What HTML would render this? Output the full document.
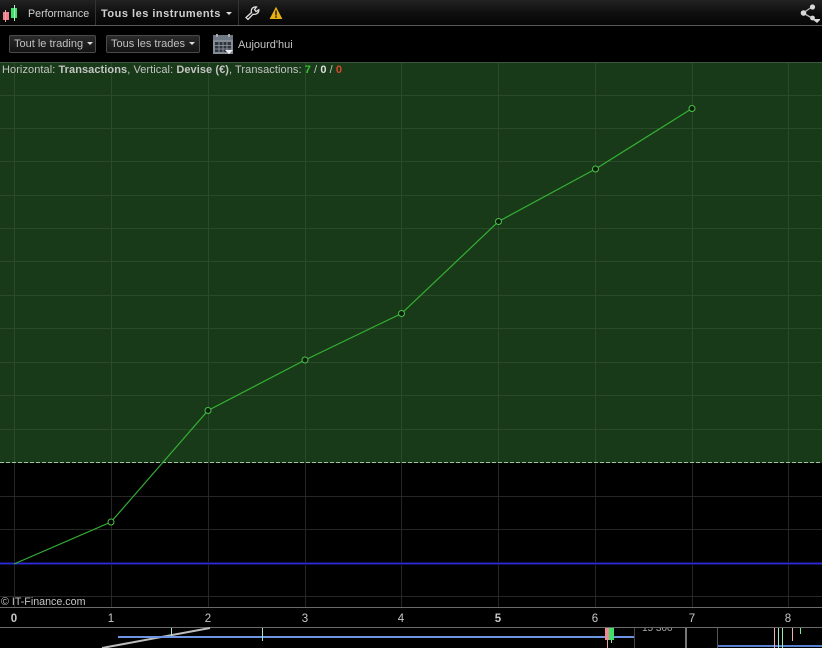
<!DOCTYPE html>
<html lang="fr"><head><meta charset="utf-8"><title>Performance</title>
<style>
html,body{margin:0;padding:0;background:#000}
#p{position:relative;width:822px;height:648px;overflow:hidden;background:#000;font-family:"Liberation Sans",sans-serif;font-size:11px;color:#ccc}
.a{position:absolute;white-space:nowrap}
#top{left:0;top:0;width:822px;height:25px;background:linear-gradient(#222,#0e0e0e 55%,#060606);border-bottom:1px solid #5a5a5a}
.sep{position:absolute;top:0;width:1px;height:25px;background:#333}
.btn{position:absolute;top:35px;height:16px;border:1px solid #4a4a4a;border-radius:2px;background:linear-gradient(#2a2a2a,#141414);line-height:17px;color:#c0c0c0;font-size:11px;text-indent:4px}
.car{display:inline-block;width:0;height:0;border-left:3px solid transparent;border-right:3px solid transparent;border-top:3px solid #ddd;vertical-align:2px;margin-left:4px;text-indent:0}
.x{position:absolute;top:612px;width:30px;text-align:center;color:#c8c8c8;font-size:11.500px;line-height:14px}
</style></head><body><div id="p">
<div class="a" id="top"></div>
<div class="sep" style="left:95px"></div><div class="sep" style="left:238px"></div>
<svg class="a" style="left:0;top:0" width="24" height="24" viewBox="0 0 24 24" shape-rendering="crispEdges">
<rect x="3" y="12" width="6" height="8" fill="#f0808c"/><rect x="5" y="10" width="1" height="12" fill="#f0a0a8"/>
<rect x="11" y="8" width="6" height="10" fill="#3ee06a"/><rect x="14" y="5" width="1" height="16" fill="#b0f0c0"/></svg>
<div class="a" style="left:28px;top:7px;line-height:14px;color:#cfcfcf;font-size:10.700px">Performance</div>
<div class="a" style="left:101px;top:7px;line-height:14px;color:#d0d0d0;font-weight:bold;font-size:11px;letter-spacing:.5px">Tous les instruments<span class="car" style="margin-left:5px"></span></div>
<svg class="a" style="left:244px;top:5px" width="16" height="16" viewBox="0 0 16 16"><path d="M2 12.500 L7.500 7.500 C6.500 4 9 1.500 12.500 2 L10.500 4.500 L12 6.500 L14.800 4.800 C15 8 12 10 9 9.200 L4 14.500 Z" fill="none" stroke="#e0e0e0" stroke-width="1.300"/></svg>
<svg class="a" style="left:269px;top:6px" width="14" height="14" viewBox="0 0 14 14"><path d="M7 .8 L13.400 13 H.6 Z" fill="#e8b010"/><rect x="6.200" y="4.500" width="1.600" height="5" fill="#322"/><rect x="6.200" y="10.200" width="1.600" height="1.600" fill="#322"/></svg>
<svg class="a" style="left:800px;top:3px" width="20" height="20" viewBox="0 0 20 20"><path d="M3 10 L12 4 M3 10 L12 15" stroke="#bbb" stroke-width="1.300"/><circle cx="3.500" cy="10" r="2.800" fill="#d8d8d8"/><circle cx="12.500" cy="4" r="2.600" fill="#d8d8d8"/><circle cx="12.500" cy="15" r="2.400" fill="#d8d8d8"/><path d="M12 16 H21 L17 20 Z" fill="#d8d8d8"/></svg>

<div class="btn" style="left:9px;width:85px">Tout le trading<span class="car"></span></div>
<div class="btn" style="left:106px;width:92px">Tous les trades<span class="car"></span></div>
<svg class="a" style="left:212px;top:33px" width="22" height="22" viewBox="0 0 22 22"><rect x="1" y="2" width="20" height="19" fill="#848c98"/><rect x="1" y="2" width="20" height="5" fill="#6f7885"/><rect x="4" y="1" width="2" height="3" fill="#aaa"/><rect x="16" y="1" width="2" height="3" fill="#aaa"/><rect x="3" y="9" width="16" height="10" fill="#30353c"/><path d="M3 12.500H19M3 16H19M7 9V19M11 9V19M15 9V19" stroke="#98a0ac" stroke-width=".8"/><path d="M13 17H21L17 21Z" fill="#eee"/></svg>
<div class="a" style="left:238px;top:38px;line-height:14px;color:#c4c4c4;font-size:11px">Aujourd'hui</div>

<div class="a" style="left:0;top:62px;width:822px;height:1px;background:#3f5a3f"></div>
<div class="a" style="left:0;top:63px;width:822px;height:400px;background:#193a19"></div>

<svg class="a" style="left:0;top:0" width="822" height="648" viewBox="0 0 822 648">
<g stroke="#2a4a2a" stroke-width="1" shape-rendering="crispEdges">
<path d="M0 95.500H822M0 128.500H822M0 161.500H822M0 195.500H822M0 228.500H822M0 261.500H822M0 295.500H822M0 328.500H822M0 362.500H822M0 395.500H822M0 429.500H822"/>
<path d="M14.500 63V463M111.500 63V463M208.500 63V463M305.500 63V463M401.500 63V463M498.500 63V463M595.500 63V463M692.500 63V463M788.500 63V463"/>
</g>
<g stroke="#262626" stroke-width="1" shape-rendering="crispEdges">
<path d="M0 496.500H822M0 529.500H822M0 596.500H822"/>
<path d="M14.500 463V607M111.500 463V607M208.500 463V607M305.500 463V607M401.500 463V607M498.500 463V607M595.500 463V607M692.500 463V607M788.500 463V607"/>
</g>
<path d="M0 462.500H822" stroke="#9ac89a" stroke-width="1" stroke-dasharray="4 2" shape-rendering="crispEdges"/>
<rect x="0" y="562" width="822" height="3" fill="#12125e"/>
<rect x="0" y="563" width="822" height="1" fill="#2a2ad8"/>
<path d="M0 607.500H822M0 627.500H822" stroke="#6a6a6a" stroke-width="1" shape-rendering="crispEdges"/>
<path d="M14 564L111 522L208 410.500L305 360L401.500 313.500L498.500 221.500L595.500 169L692 108.500" fill="none" stroke="#34b034" stroke-width="1.200"/>
<g fill="#0a200a" stroke="#4cc04c" stroke-width="1">
<circle cx="111" cy="522" r="3" fill="#000"/><circle cx="208" cy="410.500" r="3"/><circle cx="305" cy="360" r="3"/><circle cx="401.500" cy="313.500" r="3"/><circle cx="498.500" cy="221.500" r="3"/><circle cx="595.500" cy="169" r="3"/><circle cx="692" cy="108.500" r="3"/>
</g>
<path d="M102 648L210 628" stroke="#bdbdbd" stroke-width="2"/>
<path d="M118 637H634" stroke="#6d95e0" stroke-width="2" shape-rendering="crispEdges"/>
<path d="M171.500 628V636M262.500 628V641" stroke="#9fe8cc" stroke-width="1" shape-rendering="crispEdges"/>
<g shape-rendering="crispEdges">
<rect x="605" y="628" width="4" height="12" fill="#f08a92"/><rect x="609" y="628" width="5" height="12" fill="#3ee06a"/><rect x="607" y="640" width="1" height="8" fill="#f0a0a0"/><rect x="611" y="640" width="1" height="3" fill="#7fe8a0"/>
<rect x="634" y="628" width="1" height="20" fill="#444"/><rect x="685" y="628" width="2" height="20" fill="#777"/><rect x="717" y="628" width="1" height="20" fill="#555"/>
<rect x="718" y="645" width="104" height="2" fill="#5a80d0"/>
<rect x="774" y="628" width="1" height="20" fill="#f0b0b0"/><rect x="778" y="628" width="1" height="20" fill="#9fe8cc"/><rect x="782" y="628" width="1" height="20" fill="#9fe8b0"/><rect x="792" y="628" width="1" height="13" fill="#f0b0b0"/><rect x="800" y="628" width="1" height="6" fill="#7fe8a0"/>
</g>
</svg>

<div class="a" style="left:2px;top:63px;line-height:14px;font-size:11px;letter-spacing:.07px;color:#c4c4c4">Horizontal: <b>Transactions</b>, Vertical: <b>Devise (€)</b>, Transactions: <b style="color:#36c236">7</b> / <b style="color:#ddd">0</b> / <b style="color:#d8482a">0</b></div>
<div class="a" style="left:1px;top:595px;line-height:14px;font-size:10.700px;color:#c4c4c4">© IT-Finance.com</div>
<div class="x" style="left:-1px;font-weight:bold">0</div><div class="x" style="left:96px">1</div><div class="x" style="left:193px">2</div><div class="x" style="left:290px">3</div><div class="x" style="left:386px">4</div><div class="x" style="left:483px;font-weight:bold">5</div><div class="x" style="left:580px">6</div><div class="x" style="left:677px">7</div><div class="x" style="left:773px">8</div>
<div class="a" style="left:642px;top:628px;width:36px;height:4px;overflow:hidden;color:#aaa;font-size:10px;line-height:1px">15 300</div>
</div></body></html>
